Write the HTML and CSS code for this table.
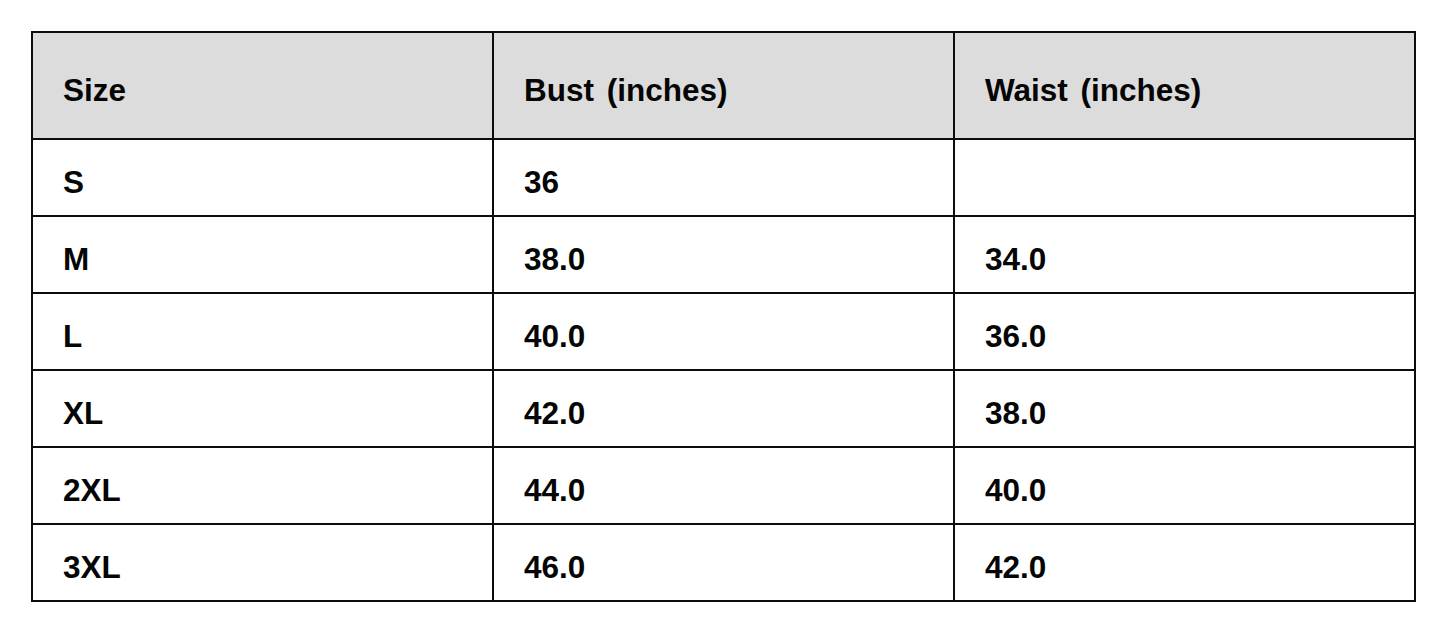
FILE: index.html
```html
<!DOCTYPE html>
<html lang="en">
<head>
<meta charset="utf-8">
<title>Size chart</title>
<link rel="stylesheet" href="styles.css">
</head>
<body>
<table class="size-table">
  <thead>
    <tr class="head-row">
      <th>Size</th>
      <th>Bust (inches)</th>
      <th>Waist (inches)</th>
    </tr>
  </thead>
  <tbody>
    <tr><td>S</td><td>36</td><td></td></tr>
    <tr><td>M</td><td>38.0</td><td>34.0</td></tr>
    <tr><td>L</td><td>40.0</td><td>36.0</td></tr>
    <tr><td>XL</td><td>42.0</td><td>38.0</td></tr>
    <tr><td>2XL</td><td>44.0</td><td>40.0</td></tr>
    <tr><td>3XL</td><td>46.0</td><td>42.0</td></tr>
  </tbody>
</table>
</body>
</html>
```
FILE: styles.css
```css
html, body {
  margin: 0;
  padding: 0;
  background: #ffffff;
}
body {
  padding: 31px 0 0 31px;
  font-family: "Liberation Sans", Arial, sans-serif;
  color: #050505;
}
.size-table {
  border-collapse: collapse;
  width: 1385px;
  table-layout: fixed;
}
.size-table th,
.size-table td {
  border: 2px solid #0c0c0c;
  padding: 9px 28px 0 30px;
  text-align: left;
  vertical-align: middle;
  font-size: 31.5px;
  font-weight: bold;
  line-height: 36px;
  word-spacing: 4px;
}
.size-table th {
  background: #dcdcdc;
}
.head-row {
  height: 107px;
}
.size-table tbody tr {
  height: 77px;
}
```
